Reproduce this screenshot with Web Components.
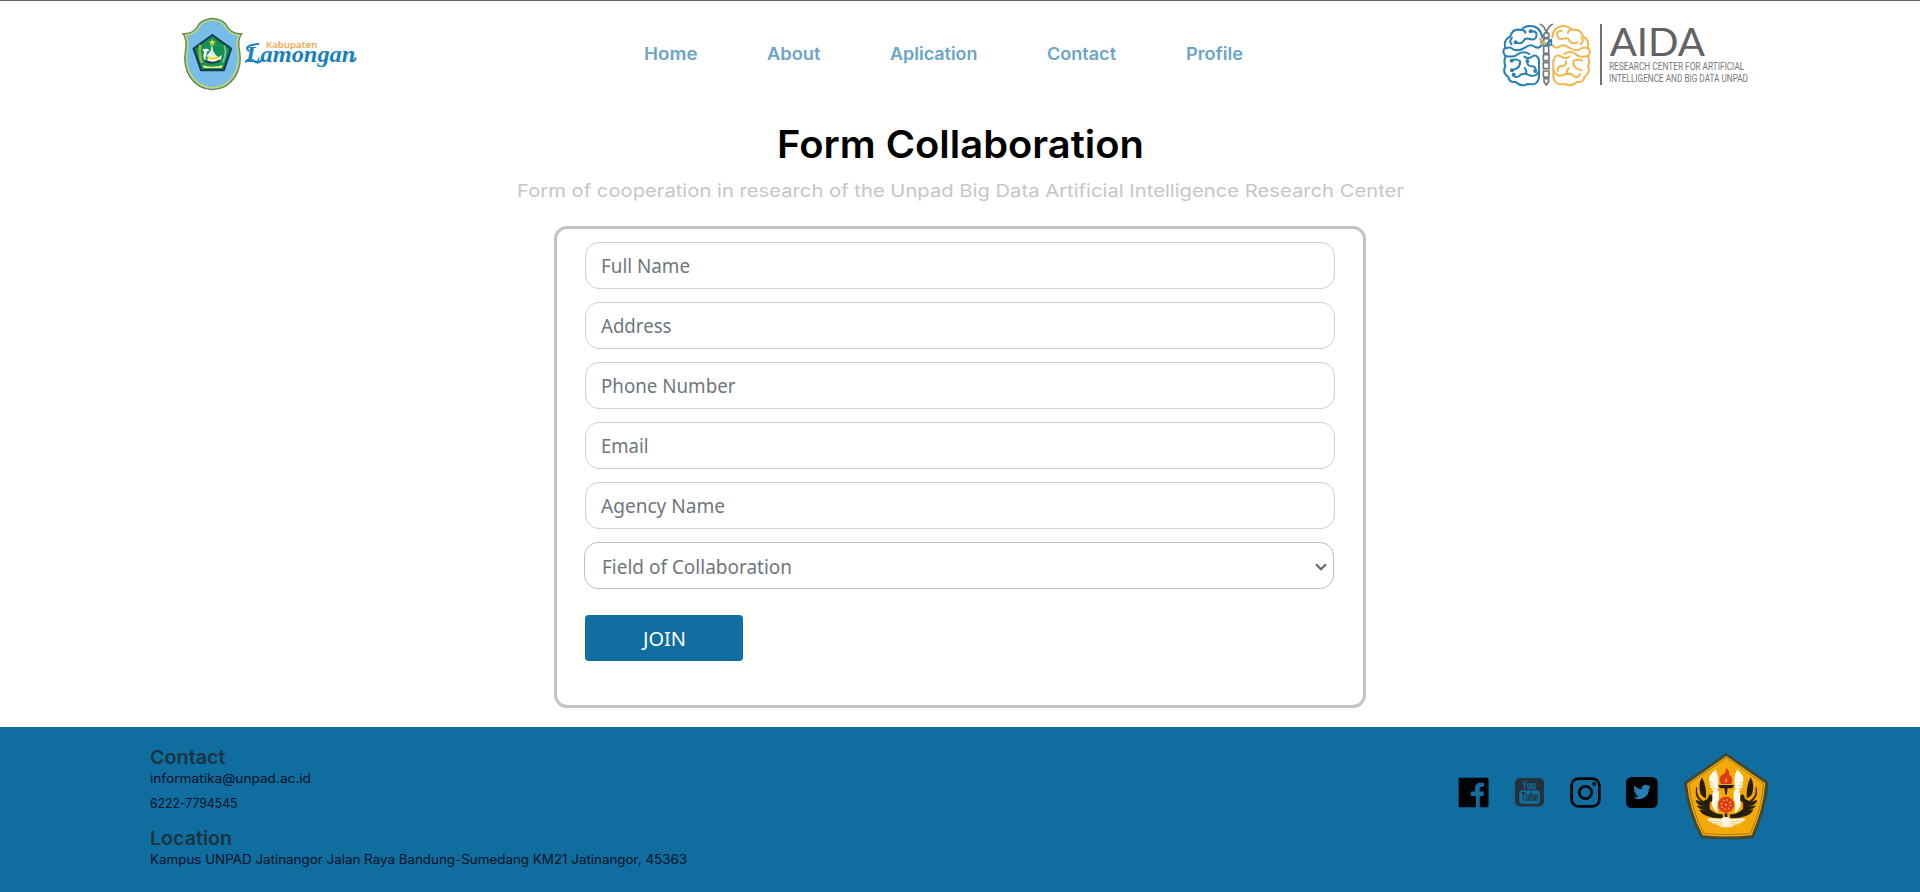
<!DOCTYPE html>
<html lang="en">
<head>
<meta charset="utf-8">
<title>Form Collaboration</title>
<style>
html,body{margin:0;height:100%;background:#fff}
body{font-family:Inter,"Open Sans",sans-serif;overflow:hidden}
</style>
</head>
<body>
<collab-page></collab-page>
<script>
const define = (name, html, after) => {
  const t = document.createElement('template');
  t.innerHTML = html;
  customElements.define(name, class extends HTMLElement {
    connectedCallback() {
      if (this.shadowRoot) return;
      this.attachShadow({mode: 'open'}).appendChild(t.content.cloneNode(true));
      if (after) after(this, this.shadowRoot);
    }
  });
};

/* One line of text set to a fixed width; its box runs from cap line to baseline. */
define('fit-text', `<style>:host{display:block;flex:none}svg{display:block;overflow:visible}text{fill:currentColor;white-space:pre}</style><svg><text x="0" lengthAdjust="spacingAndGlyphs"></text></svg>`, (el, root) => {
  const w = el.getAttribute('w'), h = el.getAttribute('h');
  const svg = root.querySelector('svg'), t = root.querySelector('text');
  svg.setAttribute('width', w); svg.setAttribute('height', h);
  t.setAttribute('y', h); t.setAttribute('textLength', w);
  t.textContent = el.getAttribute('text');
});

define('lamongan-logo', `<style>:host{display:block;width:180px;height:80px}svg{display:block;overflow:visible}</style>
<svg width="180" height="80" viewBox="30 45 540 240">
 <path d="M39 101C60 103 78 91 87 72Q98 58 127 55Q156 58 167 72C177 91 195 103 215 101Q201 120 209 155C218 210 189 266 127 269C66 266 37 210 46 155Q53 120 39 101Z" fill="#78bde9" stroke="#62894c" stroke-width="4"/>
 <path d="M46 106C66 105 83 94 91 76Q102 63 127 60Q152 63 163 76C172 94 188 105 208 106Q196 125 204 158C211 207 183 261 127 264C72 261 43 207 51 158Q58 125 46 106Z" fill="none" stroke="#d8dc48" stroke-width="3.5"/>
 <path d="M127 101L187 145L164 214H91L67 145Z" fill="#123f4e"/>
 <path d="M127 109L179 147L159 207H96L75 147Z" fill="#159253"/>
 <path d="M127 116l3 8h8l-6 5 2 8-7-5-7 5 2-8-6-5h8z" fill="#d5d942"/>
 <path d="M91 136Q86 164 96 188" stroke="#c7cd3b" stroke-width="8" stroke-dasharray="4 2" fill="none"/>
 <path d="M163 137Q171 161 158 187" stroke="#d7eee0" stroke-width="5" stroke-dasharray="3 3" fill="none"/>
 <path d="M126 130l3 22 13 20-12 8h-16l-3-14 11-14z" fill="#dfeff0"/>
 <path d="M105 147q12-4 12 7-8-3-7 8l-4 15q10 7 18-7l13 7 19-12q-4 25-28 25-26 0-28-21 1-11 3-14-7-3-4-8z" fill="#fff"/>
 <path d="M113 167q14 10 32 0l-3 12h-25z" fill="#f3d83a"/>
 <path d="M104 181q22 14 46 0" stroke="#173c47" stroke-width="6" fill="none"/>
 <path d="M97 195q30 11 61 0l-3 9h-53z" fill="#e5eb77"/>
 <text x="288" y="143" textLength="154" lengthAdjust="spacingAndGlyphs" font-family="Open Sans" font-weight="600" font-size="26" fill="#f0a544">Kabupaten</text>
 <text x="227" y="187" textLength="329" lengthAdjust="spacingAndGlyphs" font-family="Liberation Serif" font-style="italic" font-weight="700" font-size="71" fill="#1881bc">Lamongan</text>
 <path d="M236 152q-11-10 3-15t26-5M228 185q10-13 24-2t23-4M548 184q6-2 9-9" fill="none" stroke="#1881bc" stroke-width="6" stroke-linecap="round"/>
</svg>`);

define('aida-logo', `<style>:host{display:block;width:270px;height:70px}svg{display:block;overflow:visible}</style>
<svg width="270" height="70" viewBox="60 60 810 210">
 <g fill="none" stroke-width="6" stroke-linecap="round" stroke-linejoin="round">
  <g stroke="#2680b4">
   <path d="M187 112Q180 78 152 78Q133 77 124 90Q98 84 91 109Q69 121 76 141Q64 157 77 168Q70 184 76 198Q66 218 85 231Q88 248 107 246Q123 262 143 252Q175 258 177 231V181"/>
   <path d="M124 90Q137 91 136 99M150 94Q170 91 170 105Q168 123 150 117Q135 112 130 124Q122 134 107 127M96 113Q86 123 95 133M78 145Q91 139 99 148Q117 155 135 143Q151 130 165 141Q178 147 187 134M77 168Q103 173 111 164Q128 150 148 162M177 181Q172 159 154 171Q146 178 133 170M93 182Q105 174 120 183Q122 197 111 205L96 211M142 183Q140 200 158 199Q169 201 166 212M177 214Q168 232 149 226Q129 215 116 229Q104 235 101 224M134 204Q142 214 137 222"/>
  </g>
  <g stroke="#f1b64e">
   <path d="M217 112Q218 83 246 78Q263 76 275 89Q302 84 309 109Q330 121 323 141Q336 157 324 168Q331 184 324 198Q333 218 313 231Q311 248 291 246Q275 262 255 252Q223 258 220 231V181"/>
   <path d="M275 89Q263 91 264 99M245 93Q228 93 232 107Q236 121 251 116Q266 111 269 123Q278 134 292 127M304 112Q314 122 302 133M322 145Q309 139 299 149Q282 155 266 142Q249 130 236 141Q223 147 217 134M323 168Q300 174 289 164Q273 149 252 162M221 181Q225 160 245 170Q255 178 268 170M306 182Q294 174 280 184Q277 197 290 205L304 211M258 183Q260 199 243 199Q231 200 234 212M221 214Q232 232 249 225Q270 215 282 229Q297 235 300 222M266 204Q257 215 263 222"/>
  </g>
  <g fill="#2680b4" stroke="none"><circle cx="152" cy="94" r="6"/><circle cx="107" cy="127" r="6"/><circle cx="95" cy="182" r="6"/><circle cx="142" cy="183" r="6"/><circle cx="96" cy="211" r="6"/><circle cx="101" cy="224" r="6"/><circle cx="166" cy="213" r="6"/></g>
  <g stroke="#77787a" stroke-width="5"><path d="M181 73Q195 80 199 99Q204 80 217 73"/><circle cx="199" cy="106" r="8"/><path d="M191 116h16v16h-16zM191 138h15v22h-15zM190 164h17v18h-17zM190 188h17v18h-17zM190 213h17v18h-17zM192 236h14v9l-7 10-7-10z"/></g>
  <path d="M181 116L198 133L214 119V135L198 136L184 132Z" stroke="#2680b4" stroke-width="5"/>
  <path d="M182 116L197 132L183 132Z" stroke="#f1b64e" stroke-width="4"/>
 </g>
 <path d="M363 72V255" stroke="#717174" stroke-width="6"/>
 <text x="389" y="168" textLength="286" lengthAdjust="spacingAndGlyphs" font-family="Lato" font-size="117" fill="#626264">AIDA</text>
 <g font-family="Roboto" font-size="32" fill="#77777a"><text x="387" y="209" textLength="406" lengthAdjust="spacingAndGlyphs">RESEARCH CENTER FOR ARTIFICIAL</text>
 <text x="387" y="246" textLength="417" lengthAdjust="spacingAndGlyphs">INTELLIGENCE AND BIG DATA UNPAD</text></g>
</svg>`);

define('site-header', `<style>
:host{display:flex;box-sizing:border-box;height:110px;border-top:1px solid #666467;padding-left:180px;align-items:flex-start}
lamongan-logo{margin-top:14px}
nav{display:flex;gap:69.6px;margin:47.4px 0 0 284px;width:856px;font-weight:600;font-size:17.2px;color:#6ba4c6}
aida-logo{margin-top:19px}
</style><lamongan-logo></lamongan-logo>
<nav><fit-text w="53.5" h="12" text="Home"></fit-text><fit-text w="53.5" h="12" text="About"></fit-text><fit-text w="87.5" h="12" text="Aplication"></fit-text><fit-text w="69" h="12" text="Contact"></fit-text><fit-text w="57" h="12" text="Profile"></fit-text></nav>
<aida-logo></aida-logo>`);

define('form-field', `<style>
:host{display:flex;box-sizing:border-box;width:750px;height:47px;border:1px solid #ced0d8;border-radius:14px;padding:16px 7px 0 15px;justify-content:space-between;align-items:flex-start;color:#6f767d;font:19.6px "Noto Sans","Open Sans",sans-serif}
:host([select]){border-color:#bdbdc0;margin-left:-1px;padding-top:17px;padding-left:16.5px;padding-right:6px}
svg{display:none;margin-top:3px}:host([select]) svg{display:block}
</style><slot></slot><svg width="12" height="8" viewBox="0 0 12 8"><path d="M1 1.2l5 5L11 1.2" fill="none" stroke="#68696d" stroke-width="2.2"/></svg>`);

define('join-button', `<style>
:host{display:flex;box-sizing:border-box;width:158px;height:46px;border-radius:4px;background:#106ea2;color:#fff;justify-content:center;padding-top:17px;font:19.6px "Noto Sans",sans-serif}
</style><slot></slot>`);

define('collab-form', `<style>
:host{display:flex;flex-direction:column;gap:13px;box-sizing:border-box;width:812px;height:482px;border:3px solid #c3c3c3;border-radius:13px;padding:13px 28px}
join-button{margin-top:13px}
</style>
<form-field><fit-text w="89" h="14" text="Full Name"></fit-text></form-field>
<form-field><fit-text w="70.5" h="14" text="Address"></fit-text></form-field>
<form-field><fit-text w="134.5" h="14" text="Phone Number"></fit-text></form-field>
<form-field><fit-text w="47.5" h="14" text="Email"></fit-text></form-field>
<form-field><fit-text w="124" h="14" text="Agency Name"></fit-text></form-field>
<form-field select><fit-text w="190" h="14" text="Field of Collaboration"></fit-text></form-field>
<join-button><fit-text w="43" h="14" text="JOIN"></fit-text></join-button>`);

define('social-icons', `<style>:host{display:flex;align-items:flex-start}svg{display:block;flex:none;overflow:visible}</style>
<svg width="31" height="31" viewBox="0 0 31 31"><path fill="#010304" d="M2 .7h27Q30.5.7 30.5 2v27q0 1.3-1.5 1.3h-7.2V18.9h3.6l.6-4.4h-4.2v-2.7c0-1.5.7-2 2.1-2h2.2V5.7h-3.3c-3.8 0-5.8 2-5.8 5.7v3.1h-4.2v4.4H18v11.4H2Q.6 30.3.6 29V2Q.6.7 2 .7z"/></svg>
<svg style="margin:1px 0 0 26px" width="29" height="29" viewBox="0 0 29 29"><rect width="29" height="28.5" rx="5" fill="#24323a"/><rect x="4.3" y="12.3" width="20.4" height="13.5" rx="3" fill="#106da0"/><g font-family="Roboto" font-weight="700"><text x="7.2" y="11" font-size="11" textLength="14" lengthAdjust="spacingAndGlyphs" fill="#106da0">You</text><text x="6.3" y="23.3" font-size="12" textLength="17" lengthAdjust="spacingAndGlyphs" fill="#24323a">Tube</text></g></svg>
<svg style="margin-left:26px" width="31" height="31" viewBox="0 0 31 31" fill="none" stroke="#020405" stroke-width="2.7"><rect x="1.6" y="1.6" width="27.8" height="27.8" rx="7"/><circle cx="15.5" cy="15.5" r="6.2"/><circle cx="24" cy="7" r="1.9" fill="#020405" stroke="none"/></svg>
<svg style="margin-left:25px" width="32" height="31" viewBox="0 0 32 31"><rect width="31.7" height="31" rx="5.5" fill="#010304"/><path transform="translate(7.3 6.2) scale(.73)" fill="#2680b4" d="M24 4.6a10 10 0 0 1-2.8.8 5 5 0 0 0 2.1-2.7 10 10 0 0 1-3.1 1.2 4.9 4.9 0 0 0-8.4 4.5A14 14 0 0 1 1.7 3.2a4.9 4.9 0 0 0 1.5 6.5 5 5 0 0 1-2.2-.6 4.9 4.9 0 0 0 3.9 4.9 5 5 0 0 1-2.2.1 4.9 4.9 0 0 0 4.6 3.4A9.9 9.9 0 0 1 0 19.5a14 14 0 0 0 21.5-12.4A10 10 0 0 0 24 4.6z"/></svg>`);

define('unpad-logo', `<style>:host{display:block}svg{display:block}</style>
<svg width="90" height="90" viewBox="40 36 270 270">
 <path d="M170 41L295 128Q288 205 250 292Q170 299 95 292Q53 215 45 129Z" fill="#3f493b" stroke="#3f493b" stroke-width="5" stroke-linejoin="round"/>
 <path d="M170 48L287 130Q280 210 246 286Q170 293 99 286Q60 210 52 131Z" fill="#f3aa08"/>
 <path d="M170 53L282 132Q275 210 242 281Q170 287 103 281Q65 210 58 132Z" fill="none" stroke="#624e1a" stroke-width="1.5"/>
 <g id="w"><path d="M138 89Q113 104 120 130Q121 148 132 153L127 166V184Q124 205 146 220Q139 195 148 178V154L143 149Q152 115 138 89Z" fill="#fff8e8"/>
 <path d="M117 126l12 3m-9 7l12 2m-9 8l11-1" stroke="#dca02a" stroke-width="2"/>
 <path d="M97 112Q85 132 92 160Q98 173 109 174Q111 139 97 112Z" fill="#251e0c"/>
 <path d="M81 142Q78 171 101 184L114 178L120 164L127 166V182L119 188V207Q135 224 158 224V233Q135 236 112 227Q96 222 90 210L115 211Q88 208 83 198L109 200Q79 195 79 181L104 190Q72 176 81 142Z" fill="#251e0c" stroke="#251e0c" stroke-width="2"/>
 <path d="M112 237Q133 232 160 240L170 229V262Q153 262 145 254Q132 255 125 247Q116 246 112 237Z" fill="#fff4dd"/>
 <path d="M121 243l37 3m-30 5l32 1" stroke="#e9b54b" stroke-width="2"/></g>
 <use href="#w" transform="translate(340 0) scale(-1 1)"/>
 <path d="M145 135H194L187 145H174L171 164H167L164 145H151Z" fill="#251e0c"/>
 <path d="M154 132Q142 111 162 102Q173 93 168 82Q181 92 178 104Q193 112 185 132Z" fill="#dc3a17"/><path d="M169 129q-8-9 0-16 9 9 0 16z" fill="#f08a18"/>
 <circle cx="169" cy="194" r="24" fill="#dc3a17"/><circle cx="169" cy="194" r="14" fill="none" stroke="#f6a63b" stroke-width="6" stroke-dasharray="4 7"/><circle cx="169" cy="194" r="3" fill="#f7c070"/>
 <path d="M165 220h8v12h-8z" fill="#251e0c"/><ellipse cx="169" cy="240" rx="15" ry="9" fill="#fffaf0"/>
</svg>`);

define('site-footer', `<style>
:host{display:flex;box-sizing:border-box;height:165px;background:#106da0;padding-left:150px;align-items:flex-start}
.info{display:flex;flex-direction:column;width:1308px;padding-top:22.6px;font-size:12.8px;color:#04111f}
.head{font-size:19.2px;font-weight:600;color:#1a3442}
.i2{margin-top:10.4px}.i3{margin-top:16px}.h2{margin-top:22.6px}
social-icons{margin-top:50px;width:225px}
unpad-logo{margin-top:25px}
</style><div class="info">
<fit-text class="head" w="75.5" h="14" text="Contact"></fit-text>
<fit-text class="i2" w="161" h="9" text="informatika@unpad.ac.id"></fit-text>
<fit-text class="i3" w="87.5" h="9" text="6222-7794545"></fit-text>
<fit-text class="head h2" w="82" h="14" text="Location"></fit-text>
<fit-text class="i2" w="537" h="9" text="Kampus UNPAD Jatinangor Jalan Raya Bandung-Sumedang KM21 Jatinangor, 45363"></fit-text>
</div><social-icons></social-icons><unpad-logo></unpad-logo>`);

define('collab-page', `<style>
:host{display:flex;flex-direction:column;height:892px}
main{display:flex;flex-direction:column;align-items:center;height:617px}
.title{margin-top:19.6px;font-size:38.5px;font-weight:600;color:#000}
.sub{margin:26.4px 0 29px;font-size:17.8px;font-weight:400;color:#c6c6c6}
</style><site-header></site-header>
<main><fit-text class="title" w="367" h="28" text="Form Collaboration"></fit-text>
<fit-text class="sub" w="887" h="13" text="Form of cooperation in research of the Unpad Big Data Artificial Intelligence Research Center"></fit-text>
<collab-form></collab-form></main>
<site-footer></site-footer>`);
</script>
</body>
</html>
